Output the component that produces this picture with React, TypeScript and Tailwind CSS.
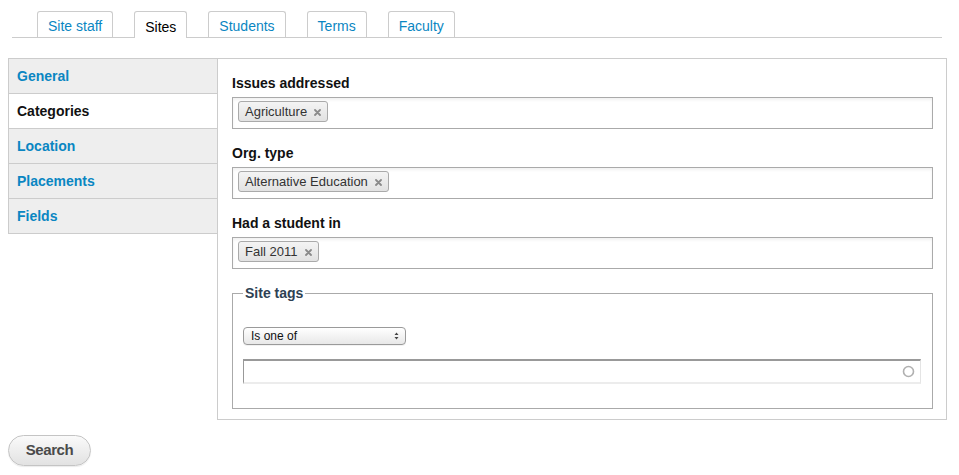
const tabs = ["Site staff", "Sites", "Students", "Terms", "Faculty"];
const sideItems = ["General", "Categories", "Location", "Placements", "Fields"];

function Chip({ label }: { label: string }) {
  return (
    <span className="inline-flex h-[21px] items-center gap-[7px] rounded-[3px] border border-[#aaaaaa] bg-gradient-to-b from-[#f4f4f4] to-[#e2e2e2] pl-[6px] pr-[6px] text-[13px] leading-none text-[#333]">
      {label}
      <svg width="7" height="7" viewBox="0 0 7 7" className="mt-px">
        <path d="M1 1L6 6M6 1L1 6" stroke="#8a8a8a" strokeWidth="1.8" strokeLinecap="round" />
      </svg>
    </span>
  );
}

function TagField({ label, value }: { label: string; value: string }) {
  return (
    <div className="mb-[14px]">
      <div className="text-[14px] font-bold leading-[20px] text-[#111]">{label}</div>
      <div className="mt-[4px] flex h-[32px] w-[701px] items-start border border-[#aaaaaa] bg-white pl-[5px] pt-[3px] shadow-[inset_0_2px_3px_rgba(0,0,0,0.06)]">
        <Chip label={value} />
      </div>
    </div>
  );
}

export default function App() {
  return (
    <div className="min-h-screen bg-white font-['Liberation_Sans',Arial,sans-serif]">
      {/* tabs */}
      <div className="ml-[12px] flex w-[930px] gap-[21px] border-b border-[#cccccc] pl-[25px] pt-[11px]">
        {tabs.map((t) => {
          const active = t === "Sites";
          return (
            <div
              key={t}
              className={
                active
                  ? "-mb-px flex h-[27px] items-center rounded-t-[3px] border border-b-0 border-[#cccccc] bg-white px-[10px] pt-[4px] text-[14px] text-black"
                  : "flex h-[26px] items-center rounded-t-[3px] border border-b-0 border-[#cccccc] bg-white px-[10px] pt-[4px] text-[14px] text-[#0a86c2]"
              }
            >
              {t}
            </div>
          );
        })}
      </div>

      {/* main */}
      <div className="ml-[8px] mt-[20px] flex items-start">
        <div className="w-[210px] border-l border-r border-t border-[#cccccc]">
          {sideItems.map((s) => {
            const active = s === "Categories";
            return (
              <div
                key={s}
                className={
                  active
                    ? "flex h-[35px] items-center border-b border-[#cccccc] bg-white pl-[8px] text-[14px] font-bold text-[#111]"
                    : "flex h-[35px] items-center border-b border-[#cccccc] bg-[#eeeeee] pl-[8px] text-[14px] font-bold text-[#0a86c2]"
                }
              >
                {s}
              </div>
            );
          })}
        </div>

        <div className="-ml-px w-[730px] border border-[#cccccc] pb-[10px] pl-[14px] pt-[14px]">
          <TagField label="Issues addressed" value="Agriculture" />
          <TagField label="Org. type" value="Alternative Education" />
          <TagField label="Had a student in" value="Fall 2011" />

          <fieldset className="w-[701px] border border-[#aaaaaa] pb-[24px] pl-[10px] pt-[24px]">
            <legend className="px-[2px] text-[14px] font-bold leading-[20px] text-[#2e4153]">Site tags</legend>
            <div className="flex h-[18px] w-[163px] items-center justify-between rounded-[4px] border border-[#9a9a9a] bg-gradient-to-b from-white to-[#e8e8e8] pl-[7px] pr-[6px] text-[12px] leading-none text-[#111] shadow-[0_1px_0_rgba(0,0,0,0.05)]">
              <span>Is one of</span>
              <svg width="5" height="8" viewBox="0 0 5 8">
                <path d="M0.5 3L2.5 0.5L4.5 3Z M0.5 5L2.5 7.5L4.5 5Z" fill="#444" />
              </svg>
            </div>
            <div className="mt-[14px] flex h-[25px] w-[678px] items-center justify-end border-b-2 border-l border-r border-t-2 border-b-[#ececec] border-l-[#999999] border-r-[#e4e4e4] border-t-[#999999] bg-white pr-[5px]">
              <svg width="13" height="13" viewBox="0 0 13 13">
                <circle cx="6.5" cy="6.5" r="5" fill="none" stroke="#b0b0b0" strokeWidth="1.6" />
              </svg>
            </div>
          </fieldset>
        </div>
      </div>

      <div className="ml-[8px] mt-[15px]">
        <button className="flex h-[31px] w-[83px] items-center justify-center rounded-full border border-[#c4c4c4] bg-gradient-to-b from-[#fafafa] to-[#e2e2e2] text-[15px] font-bold tracking-[-0.4px] text-[#4a4a4a] shadow-[0_1px_1px_rgba(0,0,0,0.08)]">
          Search
        </button>
      </div>
    </div>
  );
}
